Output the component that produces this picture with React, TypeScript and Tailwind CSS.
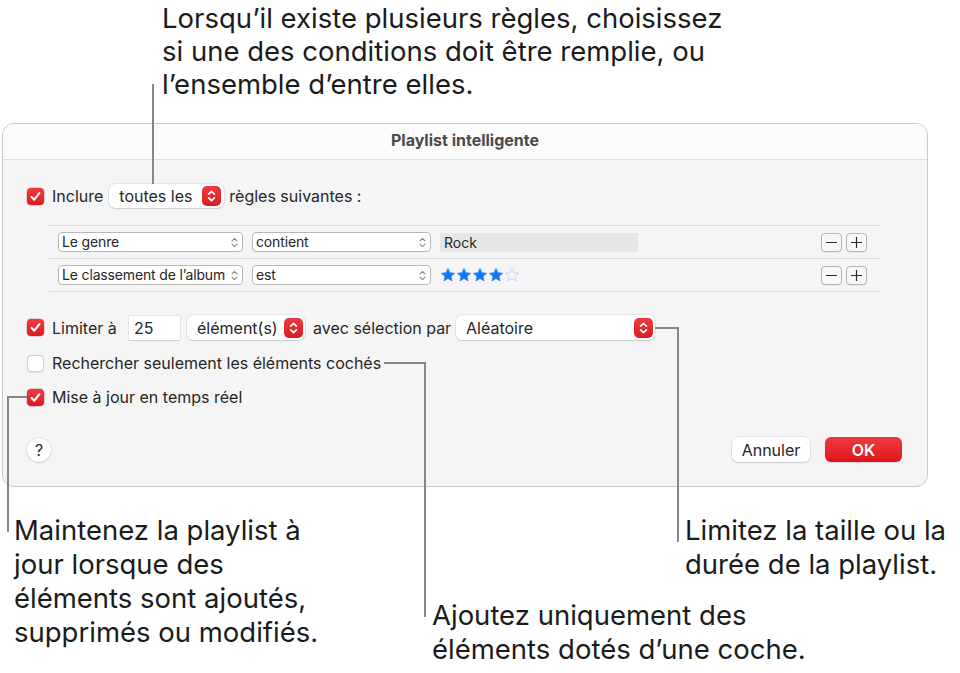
import React from "react";

// ── small bits ──
const Checkbox = ({ on }: { on: boolean }) =>
  on ? (
    <span className="flex h-[17px] w-[17px] shrink-0 items-center justify-center rounded-[4px] bg-linear-to-b from-[#f0393f] to-[#da1b21] shadow-[0_0_0_0.5px_rgba(180,0,0,0.35)]">
      <svg width="13" height="13" viewBox="0 0 13 13" fill="none">
        <path d="M2.6 6.9 L5.3 9.7 L10.4 3.2" stroke="white" strokeWidth="2.1" strokeLinecap="round" strokeLinejoin="round" />
      </svg>
    </span>
  ) : (
    <span className="h-[17px] w-[17px] shrink-0 rounded-[4px] border border-[#d0d0d0] bg-white shadow-[0_0.5px_1px_rgba(0,0,0,0.08)]" />
  );

const RedStepper = () => (
  <span className="flex h-[20px] w-[19px] shrink-0 items-center justify-center rounded-[5px] bg-linear-to-b from-[#f0393f] to-[#da1b21]">
    <svg width="9" height="14" viewBox="0 0 9 14" fill="none">
      <path d="M1.6 5.2 L4.5 2.3 L7.4 5.2 M1.6 8.8 L4.5 11.7 L7.4 8.8" stroke="white" strokeWidth="1.7" strokeLinecap="round" strokeLinejoin="round" />
    </svg>
  </span>
);

const GrayChevrons = () => (
  <svg width="7" height="11" viewBox="0 0 7 11" fill="none" className="shrink-0">
    <path d="M1 3.8 L3.5 1.3 L6 3.8 M1 7.2 L3.5 9.7 L6 7.2" stroke="#8a8a8a" strokeWidth="1.1" strokeLinecap="round" strokeLinejoin="round" />
  </svg>
);

const Star = ({ filled }: { filled: boolean }) => (
  <svg width="16" height="16" viewBox="0 0 24 24">
    <path
      d="M12 2.2 L14.9 8.6 L21.8 9.3 L16.6 14 L18.1 20.9 L12 17.3 L5.9 20.9 L7.4 14 L2.2 9.3 L9.1 8.6 Z"
      fill={filled ? "#1478f5" : "none"}
      stroke={filled ? "#1478f5" : "#b9d3f7"}
      strokeWidth={filled ? 1 : 1.3}
      strokeLinejoin="round"
    />
  </svg>
);

const SmallBtn = ({ plus }: { plus?: boolean }) => (
  <span className="flex h-[19px] w-[21px] items-center justify-center rounded-[4px] border border-[#b4b4b4] bg-[#f8f8f8] shadow-[0_0.5px_0.5px_rgba(0,0,0,0.08)]">
    <svg width="13" height="13" viewBox="0 0 13 13" fill="none">
      <path d={plus ? "M1 6.5 H12 M6.5 1 V12" : "M1 6.5 H12"} stroke="#2b2b2b" strokeWidth="1.2" />
    </svg>
  </span>
);

const RulePopup = ({ label, w }: { label: string; w: string }) => (
  <span className={`flex h-[20px] items-center justify-between gap-[2px] rounded-[4px] border border-[#b8b8b8] bg-white pl-[3px] pr-[4px] text-[14px] text-[#262626] ${w}`}>
    <span className="whitespace-nowrap leading-[18px] tracking-[-0.15px]">{label}</span>
    <GrayChevrons />
  </span>
);

const popShadow = "shadow-[0_0_0_0.5px_rgba(0,0,0,0.12),0_1px_1.5px_rgba(0,0,0,0.12)]";

export default function App() {
  return (
    <div className="relative h-[673px] w-[960px] overflow-hidden bg-white font-['Inter',sans-serif] text-[#262626]">
      {/* ── TOP CALLOUT ── */}
      <div className="h-[123px] whitespace-nowrap pl-[162px] pt-[2px] text-[27.5px] leading-[33px] text-[#1b1b1b]">
        Lorsqu’il existe plusieurs règles, choisissez
        <br />
        si une des conditions doit être remplie, ou
        <br />
        l’ensemble d’entre elles.
      </div>

      {/* ── DIALOG ── */}
      <div className="ml-[2px] flex h-[364px] w-[926px] flex-col overflow-hidden rounded-[12px] border border-[#c9c9c9] bg-[#f5f5f5]">
        {/* Title bar */}
        <div className="flex h-[36px] shrink-0 items-center justify-center border-b border-[#dedede] bg-[#fbfbfb] pb-[3px] text-[16px] font-bold text-[#4a4a4a]">
          Playlist intelligente
        </div>

        <div className="flex flex-col pl-[24px] pr-[25px] pt-[24px] text-[16px]">
          {/* Inclure row */}
          <div className="flex h-[24px] items-center">
            <Checkbox on />
            <span className="ml-[8px]">Inclure</span>
            <span className={`ml-[6px] flex h-[24px] w-[115px] items-center justify-between rounded-[6px] bg-white pl-[10px] pr-[3px] ${popShadow}`}>
              toutes les
              <RedStepper />
            </span>
            <span className="ml-[5px]">règles suivantes :</span>
          </div>

          {/* Rules */}
          <div className="ml-[22px] mt-[17px] w-[831px] border-b border-[#dcdcdc]">
            <div className="flex h-[33px] items-center border-t border-[#dcdcdc] pl-[9px] pr-[13px]">
              <RulePopup label="Le genre" w="w-[185px]" />
              <span className="ml-[9px]"><RulePopup label="contient" w="w-[179px]" /></span>
              <span className="ml-[9px] flex h-[19px] w-[198px] items-center bg-[#e6e6e6] pl-[4px] text-[14px]">Rock</span>
              <span className="ml-auto flex gap-[4px]">
                <SmallBtn />
                <SmallBtn plus />
              </span>
            </div>
            <div className="flex h-[33px] items-center border-t border-[#dcdcdc] pl-[9px] pr-[13px]">
              <RulePopup label="Le classement de l’album" w="w-[185px]" />
              <span className="ml-[9px]"><RulePopup label="est" w="w-[179px]" /></span>
              <span className="ml-[9px] flex items-center">
                <Star filled />
                <Star filled />
                <Star filled />
                <Star filled />
                <Star filled={false} />
              </span>
              <span className="ml-auto flex gap-[4px]">
                <SmallBtn />
                <SmallBtn plus />
              </span>
            </div>
          </div>

          {/* Limiter row */}
          <div className="mt-[23px] flex h-[25px] items-center">
            <Checkbox on />
            <span className="ml-[8px] w-[77px]">Limiter à</span>
            <span className="flex h-[24px] w-[51px] items-center bg-white pl-[5px] shadow-[0_0_0_0.5px_rgba(0,0,0,0.1),0_1px_1px_rgba(0,0,0,0.08)]">
              25
            </span>
            <span className={`ml-[7px] flex h-[25px] w-[118px] items-center justify-between rounded-[6px] bg-white pl-[10px] pr-[2px] ${popShadow}`}>
              élément(s)
              <RedStepper />
            </span>
            <span className="ml-[8px] w-[143px] whitespace-nowrap">avec sélection par</span>
            <span className={`flex h-[25px] w-[199px] items-center justify-between rounded-[6px] bg-white pl-[10px] pr-[2px] ${popShadow}`}>
              Aléatoire
              <RedStepper />
            </span>
          </div>

          {/* Rechercher */}
          <div className="mt-[11px] flex h-[24px] items-center">
            <Checkbox on={false} />
            <span className="ml-[8px]">Rechercher seulement les éléments cochés</span>
          </div>

          {/* Mise à jour */}
          <div className="mt-[10px] flex h-[24px] items-center">
            <Checkbox on />
            <span className="ml-[8px]">Mise à jour en temps réel</span>
          </div>

          {/* Buttons */}
          <div className="mt-[28px] flex h-[25px] items-center">
            <span className={`mt-[1px] flex h-[24px] w-[24px] items-center justify-center rounded-full bg-white text-[16px] ${popShadow}`}>
              ?
            </span>
            <span className={`ml-auto flex h-[25px] w-[78px] items-center justify-center rounded-[6px] bg-white ${popShadow}`}>
              Annuler
            </span>
            <span className="ml-[15px] flex h-[25px] w-[77px] items-center justify-center rounded-[6px] bg-linear-to-b from-[#ef3a40] to-[#df111a] font-semibold text-white shadow-[0_1px_1px_rgba(0,0,0,0.12)]">
              OK
            </span>
          </div>
        </div>
      </div>

      {/* ── BOTTOM CALLOUTS ── */}
      <div className="flex whitespace-nowrap pt-[26px] text-[27.5px] leading-[34px] text-[#1b1b1b]">
        <div className="ml-[14px] w-[418px] shrink-0">
          Maintenez la playlist à
          <br />
          jour lorsque des
          <br />
          éléments sont ajoutés,
          <br />
          supprimés ou modifiés.
        </div>
        <div className="mt-[85px] w-[253px] shrink-0">
          Ajoutez uniquement des
          <br />
          éléments dotés d’une coche.
        </div>
        <div>
          Limitez la taille ou la
          <br />
          durée de la playlist.
        </div>
      </div>

      {/* ── LEADER LINES ── */}
      <span className="absolute left-[152px] top-[84px] h-[100px] w-[2px] bg-[#878787]" />
      <span className="absolute left-[7px] top-[396px] h-[2px] w-[20px] bg-[#878787]" />
      <span className="absolute left-[7px] top-[396px] h-[136px] w-[2px] bg-[#878787]" />
      <span className="absolute left-[384px] top-[362px] h-[2px] w-[42px] bg-[#878787]" />
      <span className="absolute left-[424px] top-[362px] h-[255px] w-[2px] bg-[#878787]" />
      <span className="absolute left-[655px] top-[327px] h-[2px] w-[24px] bg-[#878787]" />
      <span className="absolute left-[677px] top-[327px] h-[215px] w-[2px] bg-[#878787]" />
    </div>
  );
}
